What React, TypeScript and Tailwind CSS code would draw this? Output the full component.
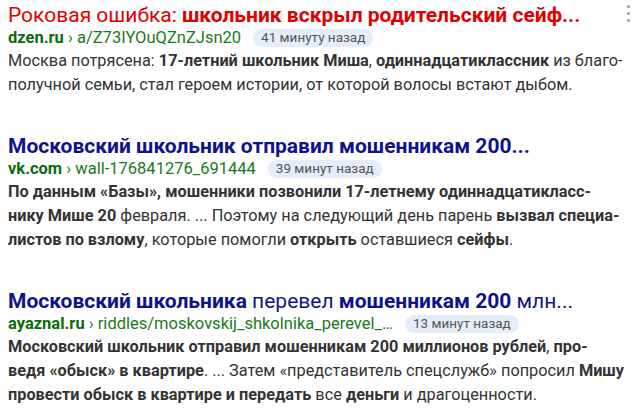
import React from 'react';

const font = { fontFamily: 'Roboto, "Liberation Sans", Arial, sans-serif' };

function Badge({ children }: { children: React.ReactNode }) {
  return (
    <span className="ml-3 inline-flex h-[18px] items-center rounded-full bg-[#e5ecfa] px-2 text-[13.5px] leading-none text-[#555]">
      {children}
    </span>
  );
}

function UrlLine({ domain, path, time }: { domain: string; path: string; time: string }) {
  return (
    <div className="flex h-[22px] items-center text-[16.5px] leading-[22px]">
      <span className="font-bold text-[#0b6b0b]">{domain}</span>
      <span className="whitespace-pre text-[#1a7a1a]"> › {path}</span>
      <Badge>{time}</Badge>
    </div>
  );
}

export default function App() {
  return (
    <div className="relative h-[415px] w-[640px] overflow-hidden bg-white px-2 pt-[3px]" style={font}>
      <div className="absolute right-[10px] top-[5px] flex flex-col gap-[4px]">
        <span className="h-[3px] w-[3px] rounded-full bg-[#9a9a9a]" />
        <span className="h-[3px] w-[3px] rounded-full bg-[#9a9a9a]" />
        <span className="h-[3px] w-[3px] rounded-full bg-[#9a9a9a]" />
      </div>

      {/* result 1 */}
      <div>
        <div className="h-6 whitespace-nowrap text-[21px] leading-6 text-[#e00000]">
          Роковая ошибка: <b>школьник вскрыл родительский сейф...</b>
        </div>
        <UrlLine domain="dzen.ru" path="a/Z73IYOuQZnZJsn20" time="41 минуту назад" />
        <div className="whitespace-nowrap text-[16.3px] leading-6 text-[#333]">
          <div>
            Москва потрясена: <b>17-летний школьник Миша</b>, <b>одиннадцатиклассник</b> из благо-
          </div>
          <div>получной семьи, стал героем истории, от которой волосы встают дыбом.</div>
        </div>
      </div>

      {/* result 2 */}
      <div className="mt-[37px]">
        <div className="h-6 whitespace-nowrap text-[21px] font-bold leading-6 text-[#10148a]">
          Московский школьник отправил мошенникам 200...
        </div>
        <UrlLine domain="vk.com" path="wall-176841276_691444" time="39 минут назад" />
        <div className="whitespace-nowrap text-[16.3px] leading-6 text-[#333]">
          <div>
            <b>По данным «Базы», мошенники позвонили 17-летнему одиннадцатикласс-</b>
          </div>
          <div>
            <b>нику Мише 20</b> февраля. ... Поэтому на следующий день парень <b>вызвал специа-</b>
          </div>
          <div>
            <b>листов по взлому</b>, которые помогли <b>открыть</b> оставшиеся <b>сейфы</b>.
          </div>
        </div>
      </div>

      {/* result 3 */}
      <div className="mt-[37px]">
        <div className="h-6 whitespace-nowrap text-[21px] leading-6 text-[#10148a]">
          <b>Московский школьника</b> перевел <b>мошенникам 200</b> млн...
        </div>
        <UrlLine domain="ayaznal.ru" path="riddles/moskovskij_shkolnika_perevel_…" time="13 минут назад" />
        <div className="whitespace-nowrap text-[16.3px] leading-6 text-[#333]">
          <div>
            <b>Московский школьник отправил мошенникам 200 миллионов рублей</b>, <b>про-</b>
          </div>
          <div>
            <b>ведя «обыск» в квартире</b>. ... Затем «представитель спецслужб» попросил <b>Мишу</b>
          </div>
          <div>
            <b>провести обыск в квартире и передать</b> все <b>деньги</b> и драгоценности.
          </div>
        </div>
      </div>
    </div>
  );
}
